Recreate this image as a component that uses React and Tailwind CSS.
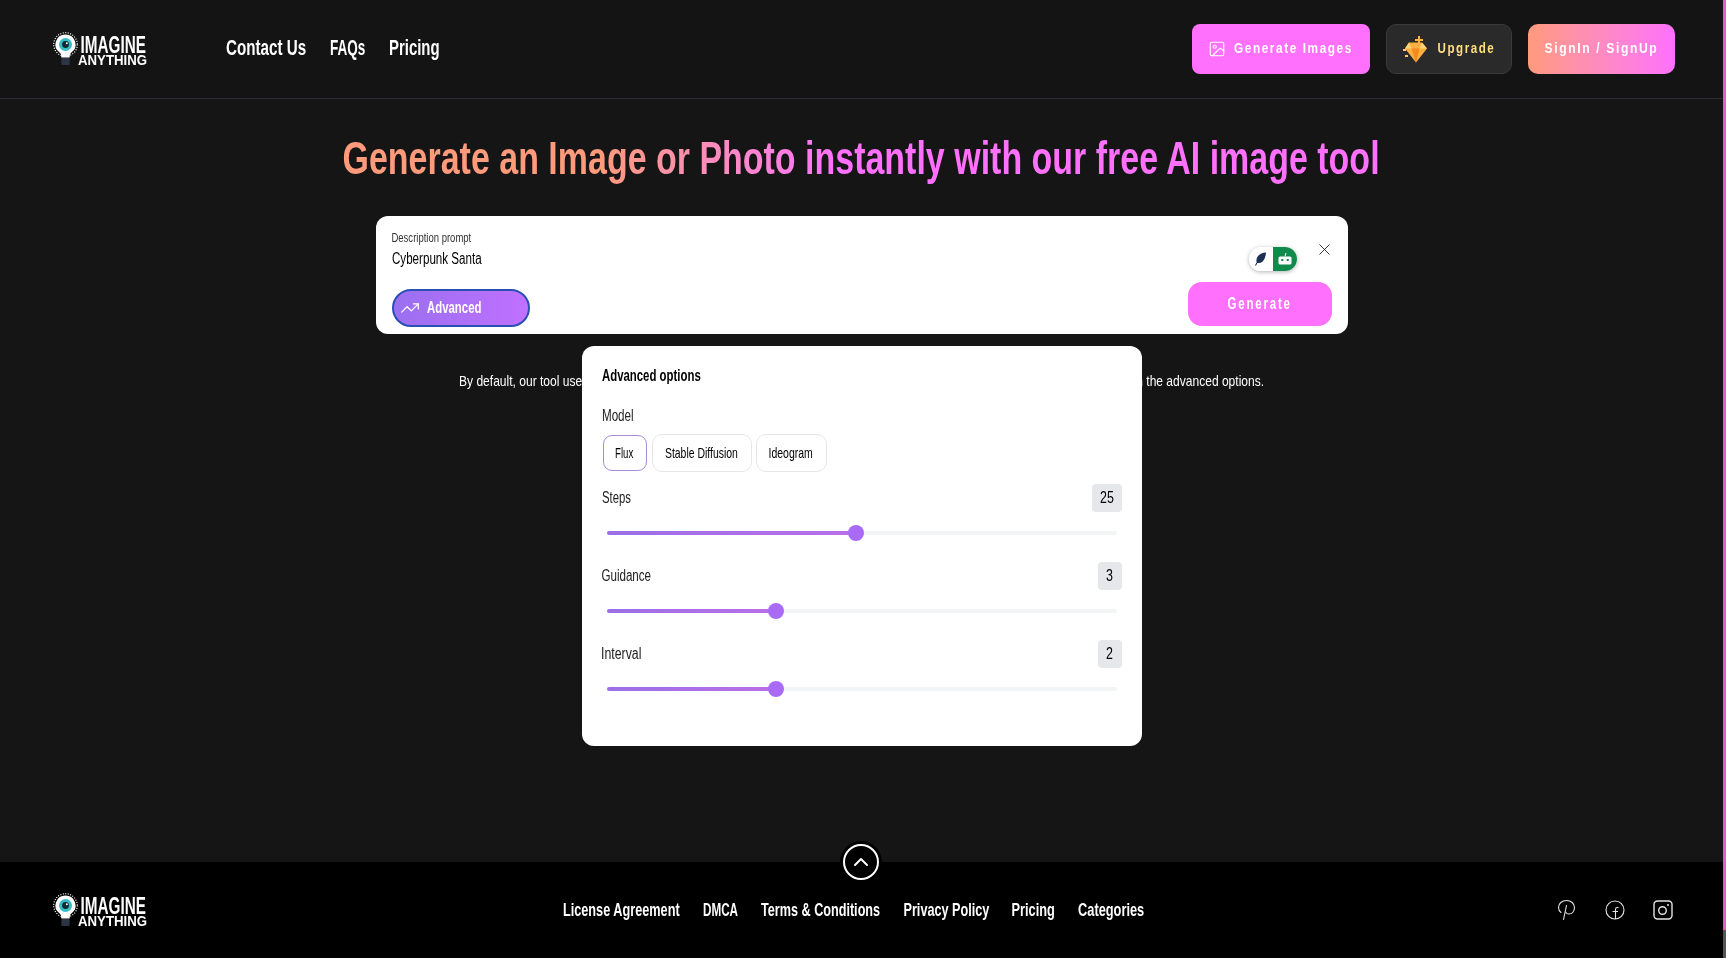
import React, { useLayoutEffect, useRef, useState } from 'react';
import { ChevronUp, X, TrendingUp, Image as ImageIcon } from 'lucide-react';

const navLinks = [
  { label: 'Contact Us', w: 'w-[80px]' },
  { label: 'FAQs', w: 'w-[35px]' },
  { label: 'Pricing', w: 'w-[51px]' },
];
const footerLinks = [
  { label: 'License Agreement', w: 'w-[117px]' },
  { label: 'DMCA', w: 'w-[35px]' },
  { label: 'Terms & Conditions', w: 'w-[119px]' },
  { label: 'Privacy Policy', w: 'w-[86px]' },
  { label: 'Pricing', w: 'w-[43px]' },
  { label: 'Categories', w: 'w-[66px]' },
];
const sliders = [
  { label: 'Steps', labelW: 'w-[29px]', value: '25', valueW: 'w-[14px]', pct: 49, box: 'w-[30px]' },
  { label: 'Guidance', labelW: 'w-[50px]', value: '3', valueW: 'w-[7px]', pct: 33.3, box: 'w-[24px]' },
  { label: 'Interval', labelW: 'w-[40px]', value: '2', valueW: 'w-[7px]', pct: 33.3, box: 'w-[24px]' },
];

// The reference font is a condensed one that isn't installed, so squeeze the text into its box
function Fit({ className = '', textClassName = '', children }) {
  const outer = useRef(null);
  const inner = useRef(null);
  const [scale, setScale] = useState(1);

  useLayoutEffect(() => {
    setScale(outer.current.clientWidth / inner.current.offsetWidth);
  }, [children]);

  return (
    <span ref={outer} className={`flex justify-center shrink-0 ${className}`}>
      <span
        ref={inner}
        className={`block shrink-0 whitespace-nowrap ${textClassName}`}
        style={{ transform: `scaleX(${scale})` }}
      >
        {children}
      </span>
    </span>
  );
}

function Logo() {
  return (
    <div className="flex items-start w-[95px] h-[34px]">
      <svg width="25" height="34" viewBox="0 0 25 34" className="shrink-0">
        <circle cx="12.500" cy="12.500" r="11.800" fill="none" stroke="#fff" strokeWidth="1.200" strokeDasharray="1 1.500" />
        <path d="M12.500 2.500a10 10 0 0 1 5.600 18.300c-1 .8-1.400 2.200-1.400 4.700H8.300c0-2.500-.4-3.900-1.400-4.700A10 10 0 0 1 12.500 2.500z" fill="#fff" />
        <circle cx="12.500" cy="12.500" r="6.500" fill="#38bcc9" />
        <circle cx="12.500" cy="12.500" r="3.400" fill="#0f2a30" />
        <circle cx="13.800" cy="11.200" r="1" fill="#fff" />
        <rect x="8.300" y="26" width="8.400" height="7" rx="1" fill="#2c3446" />
      </svg>
      <div className="flex flex-col pt-[5px] text-white">
        <Fit className="w-[65px] ml-[3px]" textClassName="text-[23px] leading-[17px] font-bold">IMAGINE</Fit>
        <Fit className="w-[69px] mt-[1px]" textClassName="text-[14px] leading-[11px] font-bold">ANYTHING</Fit>
      </div>
    </div>
  );
}

function Diamond() {
  return (
    <svg width="24" height="27" viewBox="0 0 24 27" className="shrink-0">
      <path d="M15 0h2v3h3v2h-3v3h-2V5h-3V3h3z" fill="#ffb43c" />
      <path d="M6 6.500h13l5 6-11 14-11-14z" fill="#fbb040" />
      <path d="M8.500 12.500h8l-3.500 14z" fill="#f58a1f" />
      <path d="M2 12.500l4-6 2.500 6zM24 12.500l-5-6-2.500 6z" fill="#ffd27a" />
      <path d="M0 13h3v2H0zM2 19h3v2H2z" fill="#ffc861" />
    </svg>
  );
}

function ModeToggle() {
  return (
    <div className="flex w-[48px] h-[24px] rounded-full overflow-hidden shadow-[0_1px_4px_rgba(0,0,0,0.3)]">
      <div className="w-[24px] bg-white flex items-center justify-center">
        <svg width="13" height="14" viewBox="0 0 13 14">
          <path d="M12 .5C7.500.7 3.600 3 2.600 7c-.3 1.200-.2 2.300.1 3.200L1 13.200l.9.500 1.600-2.700c3.400.6 6.500-1.400 7.500-5.400C11.500 3.900 12 2 12 .5z" fill="#1e2f55" />
        </svg>
      </div>
      <div className="w-[24px] bg-[#0f8b4c] flex items-center justify-center">
        <svg width="14" height="15" viewBox="0 0 14 15">
          <path d="M7 4.500L8 1" stroke="#fff" strokeWidth="1" />
          <rect x="0.500" y="4.500" width="13" height="8" rx="1.500" fill="#fff" />
          <rect x="3.300" y="7" width="2" height="2" fill="#0f8b4c" />
          <rect x="8.700" y="7" width="2" height="2" fill="#0f8b4c" />
        </svg>
      </div>
    </div>
  );
}

function Slider({ label, labelW, value, valueW, pct, box }) {
  return (
    <div className="h-[78px]">
      <div className="flex items-center justify-between h-[28px]">
        <Fit className={labelW} textClassName="text-[16px] text-[#222]">{label}</Fit>
        <span className={`${box} h-[28px] bg-[#e5e7eb] rounded-[4px] flex items-center justify-center text-black`}>
          <Fit className={valueW} textClassName="text-[16px]">{value}</Fit>
        </span>
      </div>
      <div className="relative mt-[19px] mx-[5px] h-[4px] rounded-full bg-[#f3f4f6]">
        <div className="h-full rounded-full bg-gradient-to-r from-[#9b6fe8] to-[#b96fe8]" style={{ width: `${pct}%` }} />
        <div className="absolute -top-[6px] -ml-[8px] w-[16px] h-[16px] rounded-full bg-[#a96bf5]" style={{ left: `${pct}%` }} />
      </div>
    </div>
  );
}

function SocialIcons() {
  return (
    <div className="flex items-center gap-[28px]">
      <svg width="20" height="22" viewBox="0 0 20 22" fill="none" stroke="#e5e5e5" strokeWidth="1.100" strokeLinecap="round">
        <path d="M4 13.500C2 12 1.500 10 1.500 8.500 1.500 4.500 5 1.500 9.500 1.500s8 3 8 7c0 4-2.500 6.500-5.500 6.500-2 0-3-1-3.200-2" />
        <path d="M9.500 6.500L6.500 20.500" />
      </svg>
      <svg width="20" height="20" viewBox="0 0 20 20" fill="none" stroke="#e5e5e5" strokeWidth="1.100">
        <circle cx="10" cy="10" r="9" />
        <path d="M13.500 7.500h-1.200c-1.200 0-1.800.7-1.800 1.900V19M7.500 11.500h5.500" />
      </svg>
      <svg width="20" height="20" viewBox="0 0 20 20" fill="none" stroke="#e5e5e5" strokeWidth="1.400">
        <rect x="1" y="1" width="18" height="18" rx="3.500" />
        <circle cx="9.500" cy="10.500" r="3.800" />
        <circle cx="15" cy="5" r="1" fill="#e5e5e5" stroke="none" />
      </svg>
    </div>
  );
}

export default function App() {
  return (
    <div className="flex h-screen overflow-hidden bg-[#151515] font-['Liberation_Sans',sans-serif] text-white">
      <div className="flex-1 flex flex-col min-w-0">
        {/* Header */}
        <header className="flex items-center justify-between h-[99px] pl-[53px] pr-[48px] bg-[#141414] border-b border-[#2b2b33]">
          <div className="flex items-center">
            <Logo />
            <nav className="flex items-center gap-[24px] ml-[78px] -mt-[3px] text-[22px] font-bold">
              {navLinks.map(link => <Fit key={link.label} className={link.w}>{link.label}</Fit>)}
            </nav>
          </div>
          <div className="flex items-center gap-[16px]">
            <button className="flex items-center justify-center gap-[8px] w-[178px] h-[50px] pr-[2px] rounded-[8px] bg-[#ff70fd]">
              <ImageIcon size={18} strokeWidth={1.500} />
              <Fit className="w-[119px] -mt-[2px]" textClassName="text-[15px] font-bold tracking-[2px]">Generate Images</Fit>
            </button>
            <button className="flex items-center justify-center gap-[10px] w-[126px] h-[50px] rounded-[10px] bg-[#2a2a2a] border border-[#3a3a3a] text-[#ffdf80]">
              <Diamond />
              <Fit className="w-[58px] -mt-[2px]" textClassName="text-[15px] font-bold tracking-[2px]">Upgrade</Fit>
            </button>
            <button className="flex items-center justify-center w-[147px] h-[50px] rounded-[10px] bg-gradient-to-r from-[#ff9a7b] to-[#ff70fd]">
              <Fit className="w-[114px] -mt-[2px]" textClassName="text-[15px] font-bold tracking-[2px]">SignIn / SignUp</Fit>
            </button>
          </div>
        </header>

        {/* Main */}
        <main className="relative flex-1 flex flex-col items-center">
          <h1 className="mt-[30px] h-[59px]">
            <Fit
              className="w-[1037px]"
              textClassName="text-[46px] leading-[59px] font-bold bg-gradient-to-r from-[#ff9a7b] from-25% to-[#ff70fd] to-48% bg-clip-text text-transparent"
            >
              Generate an Image or Photo instantly with our free AI image tool
            </Fit>
          </h1>

          <section className="mt-[28px] w-[972px] h-[118px] rounded-[12px] bg-white text-black flex justify-between px-[16px]">
            <div className="flex flex-col items-start pt-[14px]">
              <Fit className="w-[80px]" textClassName="text-[12px] leading-[16px] text-[#333]">Description prompt</Fit>
              <Fit className="w-[90px] mt-[3px]" textClassName="text-[16px] leading-[20px]">Cyberpunk Santa</Fit>
              <button className="mt-[20px] flex items-center gap-[8px] w-[138px] h-[38px] pl-[6px] rounded-full border-2 border-[#2b4fb5] bg-gradient-to-r from-[#9a6ff0] to-[#c070ff] text-white">
                <TrendingUp size={20} strokeWidth={1.500} />
                <Fit className="w-[54px]" textClassName="text-[16px] font-bold">Advanced</Fit>
              </button>
            </div>
            <div className="flex flex-col items-end">
              <div className="flex items-start mt-[31px] h-[35px]">
                <ModeToggle />
                <X size={19} strokeWidth={1} className="ml-[18px] -mr-[2px] -mt-[7px]" />
              </div>
              <button className="flex items-center justify-center w-[144px] h-[44px] rounded-[14px] bg-[#ff70fd] text-white">
                <Fit className="w-[64px]" textClassName="text-[16px] font-bold tracking-[2.500px]">Generate</Fit>
              </button>
            </div>
          </section>

          <p className="mt-[37px]">
            <Fit className="w-[805px]" textClassName="text-[15px] leading-[20px] text-white">
              By default, our tool uses the Flux model to generate your image, but you can switch to another model and fine tune its settings in the advanced options.
            </Fit>
          </p>

          {/* Advanced options popup */}
          <div className="absolute left-[581.5px] top-[247px] w-[560px] h-[400px] rounded-[12px] bg-white text-black px-[20px] pt-[20px]">
            <h2><Fit className="w-[99px]" textClassName="text-[16px] leading-[20px] font-bold">Advanced options</Fit></h2>
            <div className="mt-[20px]"><Fit className="w-[32px]" textClassName="text-[16px] leading-[20px] text-[#222]">Model</Fit></div>
            <div className="mt-[8px] flex items-center gap-[4px]">
              <button className="flex items-center justify-center ml-[1px] mr-[1px] w-[44px] h-[36px] rounded-[9px] border border-[#a98bd6]">
                <Fit className="w-[18px]" textClassName="text-[15px]">Flux</Fit>
              </button>
              <button className="flex items-center justify-center w-[100px] h-[38px] rounded-[10px] border border-[#e5e7eb]">
                <Fit className="w-[73px]" textClassName="text-[15px]">Stable Diffusion</Fit>
              </button>
              <button className="flex items-center justify-center w-[71px] h-[38px] rounded-[10px] border border-[#e5e7eb]">
                <Fit className="w-[44px]" textClassName="text-[15px]">Ideogram</Fit>
              </button>
            </div>
            <div className="mt-[12px]">
              {sliders.map(s => <Slider key={s.label} {...s} />)}
            </div>
          </div>
        </main>

        {/* Footer */}
        <footer className="relative flex items-center h-[96px] pl-[53px] pr-[50px] bg-black">
          <button className="absolute left-[840px] -top-[21px] w-[42px] h-[42px] rounded-full bg-black flex items-center justify-center">
            <span className="w-[36px] h-[36px] rounded-full border-2 border-white flex items-center justify-center">
              <ChevronUp size={24} strokeWidth={2} />
            </span>
          </button>
          <Logo />
          <nav className="flex items-center gap-[23px] ml-[415px] text-[19px] font-bold">
            {footerLinks.map(link => <Fit key={link.label} className={link.w}>{link.label}</Fit>)}
          </nav>
          <div className="ml-auto">
            <SocialIcons />
          </div>
        </footer>
      </div>

      {/* Scrollbar */}
      <div className="w-[3px] flex flex-col bg-[#555]">
        <div className="h-[930px] bg-[#e85fb8]" />
      </div>
    </div>
  );
}
